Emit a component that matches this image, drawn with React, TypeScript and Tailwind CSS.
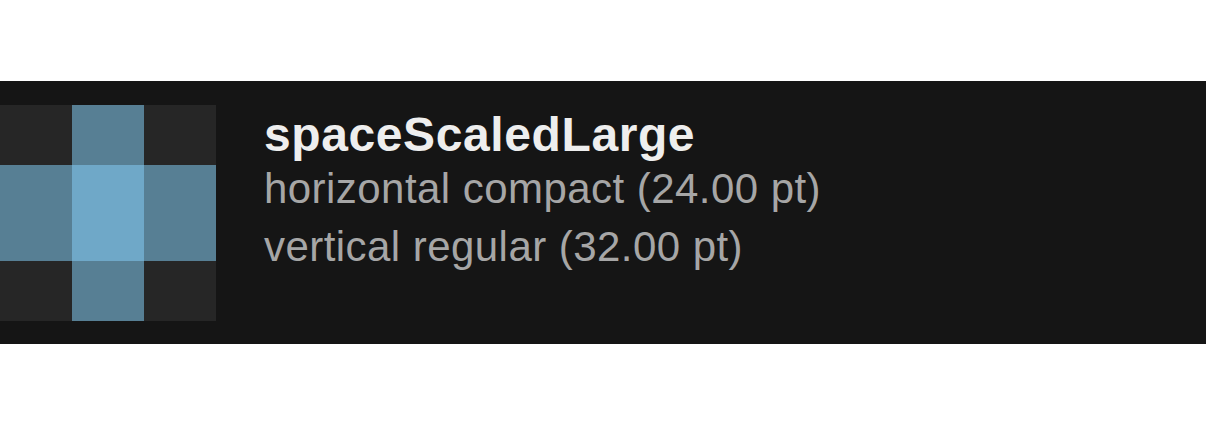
export default function App() {
  return (
    <div className="w-[1206px] h-[426px] bg-white pt-[81px]" style={{ fontFamily: '"Liberation Sans", Arial, sans-serif' }}>
      <div className="h-[263px] bg-[#151515] flex items-start gap-[48px] pt-[24px]">
        <div className="grid grid-cols-[72px_72px_72px] grid-rows-[60px_96px_60px]">
          <div className="bg-[#262626]" />
          <div className="bg-[#577f94]" />
          <div className="bg-[#262626]" />
          <div className="bg-[#577f94]" />
          <div className="bg-[#6fa8c8]" />
          <div className="bg-[#577f94]" />
          <div className="bg-[#262626]" />
          <div className="bg-[#577f94]" />
          <div className="bg-[#262626]" />
        </div>
        <div className="flex flex-col mt-[2px]">
          <div className="text-[48px] leading-[56px] font-bold tracking-[0.6px] text-[#eeeeee]">spaceScaledLarge</div>
          <div className="text-[42px] leading-[51px] tracking-[0.45px] text-[#a6a6a6]">horizontal compact (24.00 pt)</div>
          <div className="text-[42px] leading-[65px] tracking-[0.45px] text-[#a6a6a6]">vertical regular (32.00 pt)</div>
        </div>
      </div>
    </div>
  );
}
